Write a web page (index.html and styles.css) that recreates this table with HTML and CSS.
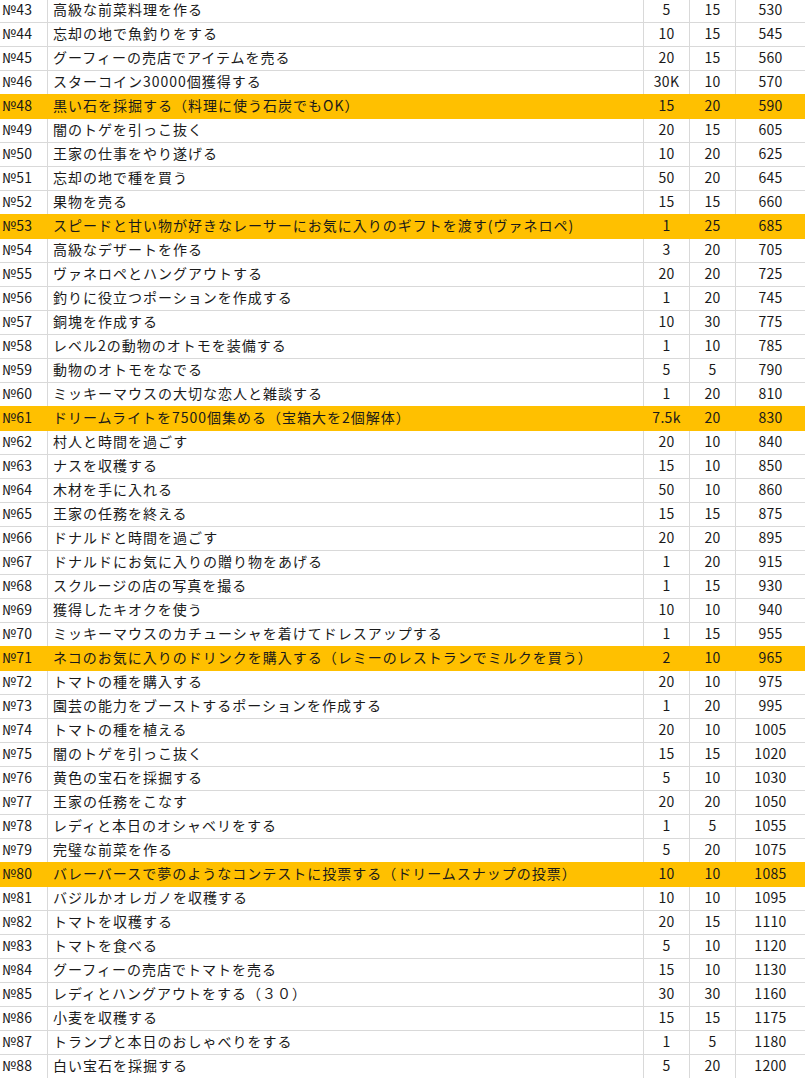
FILE: index.html
```html
<!DOCTYPE html>
<html lang="ja">
<head>
<meta charset="utf-8">
<title>Sheet</title>
<link rel="stylesheet" href="styles.css">
</head>
<body>
<div class="sheet">
<div class="row"><div class="c no">№43</div><div class="c task">高級な前菜料理を作る</div><div class="c n">5</div><div class="c n">15</div><div class="c n">530</div></div>
<div class="row"><div class="c no">№44</div><div class="c task">忘却の地で魚釣りをする</div><div class="c n">10</div><div class="c n">15</div><div class="c n">545</div></div>
<div class="row"><div class="c no">№45</div><div class="c task">グーフィーの売店でアイテムを売る</div><div class="c n">20</div><div class="c n">15</div><div class="c n">560</div></div>
<div class="row"><div class="c no">№46</div><div class="c task">スターコイン30000個獲得する</div><div class="c n">30K</div><div class="c n">10</div><div class="c n">570</div></div>
<div class="row hl"><div class="c no">№48</div><div class="c task">黒い石を採掘する（料理に使う石炭でもOK）</div><div class="c n">15</div><div class="c n">20</div><div class="c n">590</div></div>
<div class="row"><div class="c no">№49</div><div class="c task">闇のトゲを引っこ抜く</div><div class="c n">20</div><div class="c n">15</div><div class="c n">605</div></div>
<div class="row"><div class="c no">№50</div><div class="c task">王家の仕事をやり遂げる</div><div class="c n">10</div><div class="c n">20</div><div class="c n">625</div></div>
<div class="row"><div class="c no">№51</div><div class="c task">忘却の地で種を買う</div><div class="c n">50</div><div class="c n">20</div><div class="c n">645</div></div>
<div class="row"><div class="c no">№52</div><div class="c task">果物を売る</div><div class="c n">15</div><div class="c n">15</div><div class="c n">660</div></div>
<div class="row hl"><div class="c no">№53</div><div class="c task">スピードと甘い物が好きなレーサーにお気に入りのギフトを渡す(ヴァネロペ)</div><div class="c n">1</div><div class="c n">25</div><div class="c n">685</div></div>
<div class="row"><div class="c no">№54</div><div class="c task">高級なデザートを作る</div><div class="c n">3</div><div class="c n">20</div><div class="c n">705</div></div>
<div class="row"><div class="c no">№55</div><div class="c task">ヴァネロペとハングアウトする</div><div class="c n">20</div><div class="c n">20</div><div class="c n">725</div></div>
<div class="row"><div class="c no">№56</div><div class="c task">釣りに役立つポーションを作成する</div><div class="c n">1</div><div class="c n">20</div><div class="c n">745</div></div>
<div class="row"><div class="c no">№57</div><div class="c task">銅塊を作成する</div><div class="c n">10</div><div class="c n">30</div><div class="c n">775</div></div>
<div class="row"><div class="c no">№58</div><div class="c task">レベル2の動物のオトモを装備する</div><div class="c n">1</div><div class="c n">10</div><div class="c n">785</div></div>
<div class="row"><div class="c no">№59</div><div class="c task">動物のオトモをなでる</div><div class="c n">5</div><div class="c n">5</div><div class="c n">790</div></div>
<div class="row"><div class="c no">№60</div><div class="c task">ミッキーマウスの大切な恋人と雑談する</div><div class="c n">1</div><div class="c n">20</div><div class="c n">810</div></div>
<div class="row hl"><div class="c no">№61</div><div class="c task">ドリームライトを7500個集める（宝箱大を2個解体）</div><div class="c n">7.5k</div><div class="c n">20</div><div class="c n">830</div></div>
<div class="row"><div class="c no">№62</div><div class="c task">村人と時間を過ごす</div><div class="c n">20</div><div class="c n">10</div><div class="c n">840</div></div>
<div class="row"><div class="c no">№63</div><div class="c task">ナスを収穫する</div><div class="c n">15</div><div class="c n">10</div><div class="c n">850</div></div>
<div class="row"><div class="c no">№64</div><div class="c task">木材を手に入れる</div><div class="c n">50</div><div class="c n">10</div><div class="c n">860</div></div>
<div class="row"><div class="c no">№65</div><div class="c task">王家の任務を終える</div><div class="c n">15</div><div class="c n">15</div><div class="c n">875</div></div>
<div class="row"><div class="c no">№66</div><div class="c task">ドナルドと時間を過ごす</div><div class="c n">20</div><div class="c n">20</div><div class="c n">895</div></div>
<div class="row"><div class="c no">№67</div><div class="c task">ドナルドにお気に入りの贈り物をあげる</div><div class="c n">1</div><div class="c n">20</div><div class="c n">915</div></div>
<div class="row"><div class="c no">№68</div><div class="c task">スクルージの店の写真を撮る</div><div class="c n">1</div><div class="c n">15</div><div class="c n">930</div></div>
<div class="row"><div class="c no">№69</div><div class="c task">獲得したキオクを使う</div><div class="c n">10</div><div class="c n">10</div><div class="c n">940</div></div>
<div class="row"><div class="c no">№70</div><div class="c task">ミッキーマウスのカチューシャを着けてドレスアップする</div><div class="c n">1</div><div class="c n">15</div><div class="c n">955</div></div>
<div class="row hl"><div class="c no">№71</div><div class="c task">ネコのお気に入りのドリンクを購入する（レミーのレストランでミルクを買う）</div><div class="c n">2</div><div class="c n">10</div><div class="c n">965</div></div>
<div class="row"><div class="c no">№72</div><div class="c task">トマトの種を購入する</div><div class="c n">20</div><div class="c n">10</div><div class="c n">975</div></div>
<div class="row"><div class="c no">№73</div><div class="c task">園芸の能力をブーストするポーションを作成する</div><div class="c n">1</div><div class="c n">20</div><div class="c n">995</div></div>
<div class="row"><div class="c no">№74</div><div class="c task">トマトの種を植える</div><div class="c n">20</div><div class="c n">10</div><div class="c n">1005</div></div>
<div class="row"><div class="c no">№75</div><div class="c task">闇のトゲを引っこ抜く</div><div class="c n">15</div><div class="c n">15</div><div class="c n">1020</div></div>
<div class="row"><div class="c no">№76</div><div class="c task">黄色の宝石を採掘する</div><div class="c n">5</div><div class="c n">10</div><div class="c n">1030</div></div>
<div class="row"><div class="c no">№77</div><div class="c task">王家の任務をこなす</div><div class="c n">20</div><div class="c n">20</div><div class="c n">1050</div></div>
<div class="row"><div class="c no">№78</div><div class="c task">レディと本日のオシャベリをする</div><div class="c n">1</div><div class="c n">5</div><div class="c n">1055</div></div>
<div class="row"><div class="c no">№79</div><div class="c task">完璧な前菜を作る</div><div class="c n">5</div><div class="c n">20</div><div class="c n">1075</div></div>
<div class="row hl"><div class="c no">№80</div><div class="c task">バレーバースで夢のようなコンテストに投票する（ドリームスナップの投票）</div><div class="c n">10</div><div class="c n">10</div><div class="c n">1085</div></div>
<div class="row"><div class="c no">№81</div><div class="c task">バジルかオレガノを収穫する</div><div class="c n">10</div><div class="c n">10</div><div class="c n">1095</div></div>
<div class="row"><div class="c no">№82</div><div class="c task">トマトを収穫する</div><div class="c n">20</div><div class="c n">15</div><div class="c n">1110</div></div>
<div class="row"><div class="c no">№83</div><div class="c task">トマトを食べる</div><div class="c n">5</div><div class="c n">10</div><div class="c n">1120</div></div>
<div class="row"><div class="c no">№84</div><div class="c task">グーフィーの売店でトマトを売る</div><div class="c n">15</div><div class="c n">10</div><div class="c n">1130</div></div>
<div class="row"><div class="c no">№85</div><div class="c task">レディとハングアウトをする（３０）</div><div class="c n">30</div><div class="c n">30</div><div class="c n">1160</div></div>
<div class="row"><div class="c no">№86</div><div class="c task">小麦を収穫する</div><div class="c n">15</div><div class="c n">15</div><div class="c n">1175</div></div>
<div class="row"><div class="c no">№87</div><div class="c task">トランプと本日のおしゃべりをする</div><div class="c n">1</div><div class="c n">5</div><div class="c n">1180</div></div>
<div class="row"><div class="c no">№88</div><div class="c task">白い宝石を採掘する</div><div class="c n">5</div><div class="c n">20</div><div class="c n">1200</div></div>
</div>
</body>
</html>
```

FILE: styles.css
```css
html, body {
  margin: 0;
  padding: 0;
  background: #ffffff;
}

body {
  overflow: hidden;
}

.sheet {
  margin-top: -1px;
  font-family: "Noto Sans CJK JP", "Noto Sans", sans-serif;
  font-size: 14px;
  color: #1a1a1a;
}

.row {
  display: grid;
  grid-template-columns: 48px 596px 46px 46px 70px;
  height: 24px;
}

.c {
  box-sizing: border-box;
  height: 24px;
  border-right: 1px solid #d9d9d9;
  border-bottom: 1px solid #d9d9d9;
  display: flex;
  align-items: center;
  white-space: nowrap;
  overflow: hidden;
  line-height: 1;
  padding-bottom: 3px;
}

.no {
  padding-left: 2px;
  letter-spacing: 0.3px;
}

.task {
  padding-left: 5px;
  letter-spacing: 1px;
}

.n {
  justify-content: center;
  letter-spacing: 0.3px;
}

.row.hl {
  background: #ffc000;
  box-shadow: 0 -1px 0 #ffc000;
  position: relative;
}

.row.hl .c {
  border-color: #ffc000;
}
```
